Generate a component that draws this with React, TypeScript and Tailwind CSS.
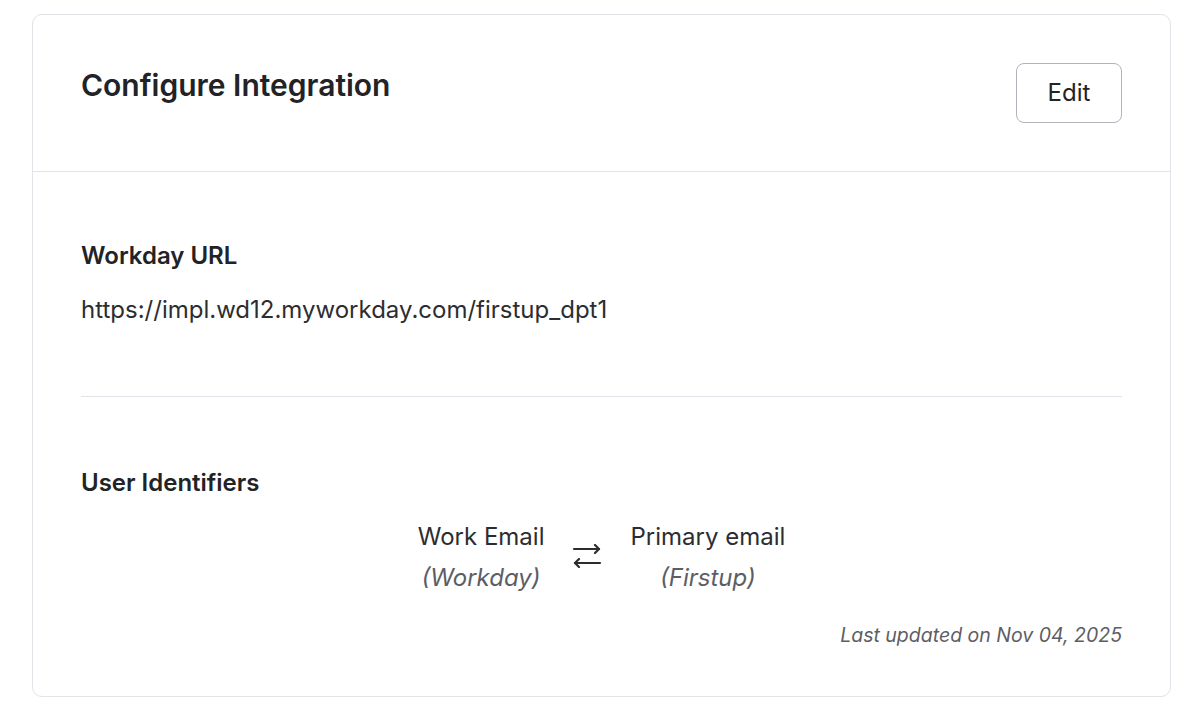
export default function App() {
  return (
    <div className="min-h-screen bg-white px-8 pt-[14px] pb-4 font-['Inter',sans-serif] text-[#222326]">
      <div className="w-[1139px] rounded-[10px] border border-[#e2e2e8] bg-white">
        {/* Header */}
        <div className="flex items-start justify-between border-b border-[#e2e2e8] px-12 pt-12 pb-12">
          <h1 className="mt-[4px] text-[30px] font-semibold leading-[36px]">
            Configure Integration
          </h1>
          <button className="h-[60px] w-[106px] rounded-lg border border-[#b3b3bb] text-[24px] text-[#222326]">
            Edit
          </button>
        </div>

        {/* Body */}
        <div className="px-12 pt-[68px] pb-12">
          <h2 className="text-[24px] font-semibold leading-[32px]">Workday URL</h2>
          <div className="mt-[22px] text-[24px] leading-[32px] text-[#2c2d31]">
            https://impl.wd12.myworkday.com/firstup_dpt1
          </div>

          <div className="mt-[70px] border-t border-[#e2e2e8]" />

          <h2 className="mt-[70px] text-[24px] font-semibold leading-[32px]">User Identifiers</h2>

          <div className="mt-[22px] flex items-start justify-center gap-[28px]">
            <div className="flex flex-col items-center">
              <span className="text-[24px] leading-[32px] text-[#2c2d31]">Work Email</span>
              <span className="mt-[9px] text-[24px] italic leading-[32px] text-[#5d5e64]">(Workday)</span>
            </div>
            <svg width="30" height="24" viewBox="0 0 30 24" fill="none" stroke="#2c2d31" strokeWidth="2.2" strokeLinecap="round" strokeLinejoin="round" className="mt-[23px]">
              <path d="M2 5h25" />
              <path d="M23 1l4 4-4 4" />
              <path d="M28 19H3" />
              <path d="M7 15l-4 4 4 4" />
            </svg>
            <div className="flex flex-col items-center">
              <span className="text-[24px] leading-[32px] text-[#2c2d31]">Primary email</span>
              <span className="mt-[9px] text-[24px] italic leading-[32px] text-[#5d5e64]">(Firstup)</span>
            </div>
          </div>

          <div className="mt-[28px] text-right text-[19.5px] italic leading-[26px] text-[#5d5e64]">
            Last updated on Nov 04, 2025
          </div>
        </div>
      </div>
    </div>
  );
}
